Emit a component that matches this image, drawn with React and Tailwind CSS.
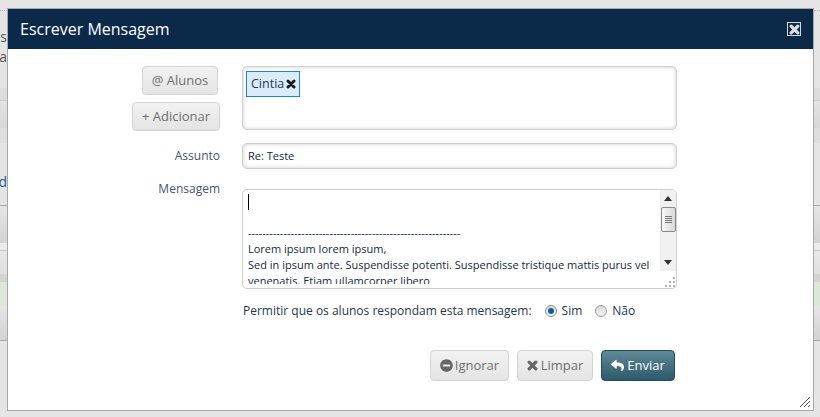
import React from 'react';
import { FaMinusCircle, FaReply } from 'react-icons/fa';

const grayBtn = "flex items-center justify-center rounded-[4px] border border-[#d2d2d2] bg-gradient-to-b from-[#f2f2f2] to-[#e4e4e4] text-[13px] text-[#6f6f6f]";
const field = "ml-[22px] w-[435px] rounded-[5px] border border-[#cfcfcf] shadow-[inset_0_0_4px_rgba(0,0,0,0.2)]";

function XIcon({ size = 10, className }) {
  return (
    <svg width={size} height={size} viewBox="0 0 10 10" className={className}>
      <path d="M2 2 8 8M8 2 2 8" stroke="currentColor" strokeWidth="3" strokeLinecap="round" fill="none" />
    </svg>
  );
}

// page rows showing behind the modal, on both sides
function SideStrip({ width, top, middle }) {
  return (
    <div className={"shrink-0 overflow-hidden flex flex-col bg-[#e5e5e5] text-[14px] leading-[20px] text-[#555] " + width}>
      <div className="h-[78px] mt-[10px] border-t border-dotted border-[#bbb] pt-[16px] flex flex-col items-end">{top}</div>
      <div className="h-[12px] shrink-0 bg-[#dcdcdc]" />
      <div className="h-[28px] shrink-0 border-t border-[#ccc] bg-gradient-to-b from-[#e4e4e4] to-[#d6d6d6]" />
      <div className="h-[15px] shrink-0 bg-[#dedede]" />
      <div className="h-[62px] shrink-0 pt-[29px] text-[#1b5f8a] flex justify-end">{middle}</div>
      <div className="h-[38px] shrink-0 border-t border-[#aaa] bg-gradient-to-b from-[#e6e6e6] to-[#d2d2d2]" />
      <div className="h-[7px] shrink-0 bg-[#ececec]" />
      <div className="h-[24px] shrink-0 border-t border-[#c4c4c4] bg-gradient-to-b from-[#e8e8e8] to-[#e0e0e0]" />
      <div className="h-[8px] shrink-0 bg-[#d4d4d4]" />
      <div className="h-[24px] shrink-0 bg-[#dbe8d8]" />
      <div className="h-[35px] shrink-0 border-b border-[#aaa] bg-gradient-to-b from-[#e6e6e6] to-[#d2d2d2]" />
    </div>
  );
}

export default function App() {
  return (
    <div className="w-[820px] h-[417px] overflow-hidden flex bg-[#e5e5e5] font-['Open_Sans',sans-serif] text-[#0f2a44]">
      <SideStrip width="w-[7px]" top={<><span>os</span><span>a</span></>} middle={<span>d</span>} />

      <div className="w-[807px] h-[403px] mt-[8px] border border-[#a8a8a8] bg-white flex flex-col relative">
        <div className="h-[40px] shrink-0 bg-[#0b2a4a] flex items-center justify-between pl-[12px] pr-[12px]">
          <span className="text-[16px] text-white">Escrever Mensagem</span>
          <span className="w-[14px] h-[14px] border border-[#d8d8d8] flex items-center justify-center text-[#dcdcdc]">
            <XIcon size={11} />
          </span>
        </div>

        <div className="flex pt-[17px]">
          <div className="w-[212px] shrink-0 flex flex-col items-end gap-[7px]">
            <button className={grayBtn + " w-[76px] h-[29px] mr-[2px]"}>@ Alunos</button>
            <button className={grayBtn + " w-[88px] h-[29px]"}>+ Adicionar</button>
          </div>
          <div className={field + " h-[64px] p-[3px]"}>
            <div className="inline-flex items-center gap-[2px] h-[26px] pl-[4px] pr-[3px] border border-[#1a8ac6] bg-[#dcebf9] text-[12.5px] text-[#1f3a5f]">
              Cintia <XIcon size={10} className="text-[#1c1c1c]" />
            </div>
          </div>
        </div>

        <div className="flex items-center mt-[12px]">
          <div className="w-[212px] shrink-0 text-right text-[12px] text-[#44566a]">Assunto</div>
          <div className={field + " h-[26px] px-[5px] flex items-center text-[11px]"}>Re: Teste</div>
        </div>

        <div className="flex mt-[20px]">
          <div className="w-[212px] shrink-0 text-right text-[12px] leading-[18px] text-[#44566a] -mt-[9px]">Mensagem</div>
          <div className="ml-[22px] w-[435px] h-[100px] rounded-[5px] border border-[#cfcfcf] flex overflow-hidden relative">
            <div className="flex-1 pl-[5px] pt-[4px] text-[11px] leading-[16px] overflow-hidden h-[94px]">
              <div className="w-px h-[16px] bg-black" />
              <div className="h-[15px]" />
              <div className="whitespace-nowrap">{"-".repeat(60)}</div>
              <div className="whitespace-nowrap">Lorem ipsum lorem ipsum,</div>
              <div className="whitespace-nowrap">Sed in ipsum ante. Suspendisse potenti. Suspendisse tristique mattis purus vel</div>
              <div className="whitespace-nowrap">venenatis. Etiam ullamcorper libero</div>
            </div>
            <div className="w-[16px] shrink-0 h-[81px] bg-[#f0f0f0] flex flex-col items-center relative">
              <svg width="8" height="5" viewBox="0 0 8 5" className="mt-[6px]"><path d="M4 0 8 5H0z" fill="#333" /></svg>
              <div className="mt-[6px] w-[15px] h-[25px] border border-[#8a8a8a] rounded-[2px] bg-gradient-to-r from-[#f8f8f8] to-[#d8d8d8] flex flex-col items-center justify-center gap-[1px]">
                <span className="w-[7px] h-px bg-[#777]" />
                <span className="w-[7px] h-px bg-[#777]" />
                <span className="w-[7px] h-px bg-[#777]" />
                <span className="w-[7px] h-px bg-[#777]" />
              </div>
              <svg width="8" height="5" viewBox="0 0 8 5" className="absolute bottom-[6px]"><path d="M0 0H8L4 5z" fill="#333" /></svg>
            </div>
            <svg width="12" height="12" viewBox="0 0 12 12" className="absolute right-0 bottom-0">
              <g fill="#b5b5b5">
                <rect x="9" y="1" width="2" height="2" />
                <rect x="5" y="5" width="2" height="2" />
                <rect x="9" y="5" width="2" height="2" />
                <rect x="1" y="9" width="2" height="2" />
                <rect x="5" y="9" width="2" height="2" />
                <rect x="9" y="9" width="2" height="2" />
              </g>
            </svg>
          </div>
        </div>

        <div className="flex items-center mt-[13px] pl-[235px] text-[12px] text-[#23384e]">
          <span>Permitir que os alunos respondam esta mensagem:</span>
          <span className="ml-[13px] w-[12px] h-[12px] rounded-full border border-[#8a8a8a] bg-gradient-to-b from-[#dcdcdc] to-[#f6f6f6] flex items-center justify-center">
            <span className="w-[6px] h-[6px] rounded-full bg-[#0b5f96]" />
          </span>
          <span className="ml-[5px]">Sim</span>
          <span className="ml-[13px] w-[12px] h-[12px] rounded-full border border-[#9a9a9a] bg-gradient-to-b from-[#d8d8d8] to-[#f4f4f4]" />
          <span className="ml-[5px]">Não</span>
        </div>

        <div className="flex justify-end gap-[8px] mt-[30px] pr-[138px]">
          <button className={grayBtn + " h-[31px] w-[79px] gap-[2px]"}><FaMinusCircle size={13} className="text-[#666]" /> Ignorar</button>
          <button className={grayBtn + " h-[31px] w-[76px] gap-[3px]"}><XIcon size={11} className="text-[#666]" /> Limpar</button>
          <button className="h-[31px] w-[74px] flex items-center justify-center gap-[3px] rounded-[4px] border border-[#234c5c] bg-gradient-to-b from-[#5f8997] to-[#2c5a6c] text-[13px] text-white">
            <FaReply size={13} /> Enviar
          </button>
        </div>

        <svg width="12" height="12" viewBox="0 0 12 12" className="absolute right-[2px] bottom-[2px]">
          <path d="M1 11 11 1M5 11 11 5M9 11 11 9" stroke="#555" strokeWidth="1" fill="none" />
        </svg>
      </div>

      <SideStrip width="w-[6px]" />
    </div>
  );
}
